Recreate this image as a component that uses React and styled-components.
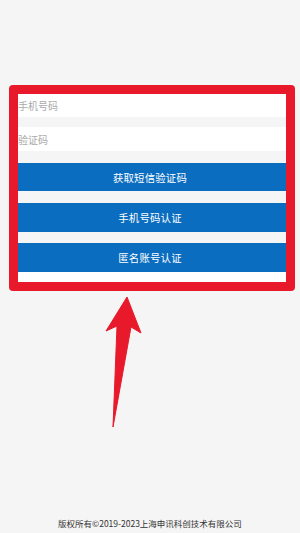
import React from "react";
import styled, {createGlobalStyle} from "styled-components";

const GlobalStyle = createGlobalStyle`
  html, body {
    margin: 0;
    padding: 0;
    background: #f5f5f5;
  }
  * {
    box-sizing: border-box;
  }
`;

const Page = styled.div`
  position: relative;
  width: 300px;
  height: 533px;
  overflow: hidden;
  display: flex;
  flex-direction: column;
  background: #f5f5f5;
  font-family: "Noto Sans CJK SC", "Noto Sans", sans-serif;
`;

const Form = styled.div`
  margin: 94px 12px 0;
  display: flex;
  flex-direction: column;
`;

const Field = styled.div`
  height: ${({h}) => h}px;
  margin-bottom: ${({gap}) => gap}px;
  background: #fff;
  display: flex;
  align-items: center;
  padding-left: 6px;
  font-size: 10px;
  color: #a9a9a9;
`;

const Button = styled.div`
  height: ${({h}) => h}px;
  margin-bottom: ${({gap}) => gap}px;
  background: #0a6dbf;
  color: #fff;
  font-size: 10.4px;
  display: flex;
  align-items: center;
  justify-content: center;
  letter-spacing: 0.2px;
`;

const WhiteStrip = styled.div`
  height: 10px;
  background: #fff;
`;

const Spacer = styled.div`
  flex: 1;
`;

const Footer = styled.div`
  height: 22px;
  text-align: center;
  font-size: 8.5px;
  color: #333;
  line-height: 12px;
  padding-top: 6px;
`;

const Frame = styled.div`
  position: absolute;
  left: 9px;
  top: 85px;
  width: 286px;
  height: 206px;
  border: 9px solid #e8192a;
  border-radius: 4px;
  pointer-events: none;
`;

const Arrow = styled.svg`
  position: absolute;
  left: 0;
  top: 0;
  pointer-events: none;
`;

export default function App() {
  return (
    <Page>
      <GlobalStyle/>
      <Form>
        <Field h={23} gap={10}>手机号码</Field>
        <Field h={24} gap={12}>验证码</Field>
        <Button h={28} gap={12}>获取短信验证码</Button>
        <Button h={29} gap={11}>手机号码认证</Button>
        <Button h={29} gap={0}>匿名账号认证</Button>
        <WhiteStrip/>
      </Form>
      <Spacer/>
      <Footer>版权所有©2019-2023上海申讯科创技术有限公司</Footer>
      <Frame/>
      <Arrow width="300" height="533" viewBox="0 0 300 533">
        <polygon
          points="127,297 141,333 131,327 113,427 117,326 106,331"
          fill="#e8192a"
          stroke="#e8192a"
          strokeWidth="1"
          strokeLinejoin="round"
        />
      </Arrow>
    </Page>
  );
}
